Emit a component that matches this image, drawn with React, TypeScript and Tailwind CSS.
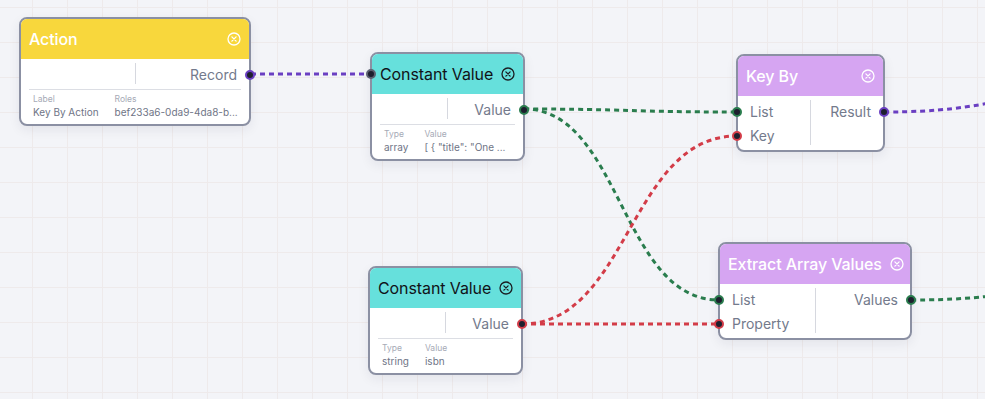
import React from "react";

type HandleProps = { side: "left" | "right"; ring: string };

function Handle({ side, ring }: HandleProps) {
  const pos = side === "left" ? "-left-[6px]" : "-right-[6px]";
  return (
    <span
      className={`absolute top-1/2 -translate-y-1/2 ${pos} w-[10px] h-[10px] rounded-full bg-[#1d1f2e] border-2 ${ring} z-10`}
    />
  );
}

function CloseIcon({ color }: { color: string }) {
  return (
    <svg className="shrink-0" width="14" height="14" viewBox="0 0 14 14" fill="none" stroke={color} strokeWidth="1.3" strokeLinecap="round">
      <circle cx="7" cy="7" r="6" />
      <path d="M4.9 4.9 9.1 9.1M9.1 4.9 4.9 9.1" />
    </svg>
  );
}

type Row = { text?: string; handle?: string };

function NodeCard({
  pos,
  headerBg,
  title,
  dark,
  inputHandle,
  left,
  right,
  details,
}: {
  pos: string;
  headerBg: string;
  title: string;
  dark?: boolean;
  inputHandle?: string;
  left: Row[];
  right: Row[];
  details?: { k1: string; v1: string; k2: string; v2: string };
}) {
  return (
    <div
      className={`absolute ${pos} rounded-lg border-2 border-[#8b90a3] bg-white shadow-[0_4px_12px_rgba(30,35,60,0.07)]`}
    >
      <div
        className={`relative h-[40px] ${headerBg} rounded-t-[6px] flex items-center justify-between pl-2 pr-2 gap-2`}
      >
        {inputHandle && <Handle side="left" ring={inputHandle} />}
        <span className={`text-[16px] whitespace-nowrap tracking-[-0.1px] ${dark ? "text-[#111318] font-normal" : "text-white font-medium"}`}>
          {title}
        </span>
        <CloseIcon color={dark ? "#1b1d22" : "#ffffff"} />
      </div>
      <div className="flex pt-1 pb-0.5">
        <div className="flex-1 flex flex-col">
          {left.map((r, i) => (
            <div key={i} className="relative h-6 flex items-center pl-3 text-sm text-[#737a8c]">
              {r.handle && <Handle side="left" ring={r.handle} />}
              {r.text}
            </div>
          ))}
        </div>
        <div className="w-px bg-[#d6d8df] mb-[3px]" />
        <div className="flex-1 flex flex-col">
          {right.map((r, i) => (
            <div key={i} className="relative h-6 flex items-center justify-end pr-3 text-sm text-[#737a8c]">
              {r.handle && <Handle side="right" ring={r.handle} />}
              {r.text}
            </div>
          ))}
        </div>
      </div>
      {details && (
        <>
          <div className="mx-2 h-px bg-[#dcdee4]" />
          <div className="mx-2 grid grid-cols-[auto_minmax(0,1fr)] gap-x-4 px-[4px] pt-[3px] pb-[5px]">
            <span className="text-[8.5px] leading-[12px] text-[#a6aab6]">{details.k1}</span>
            <span className="text-[8.5px] leading-[12px] text-[#a6aab6]">{details.k2}</span>
            <span className="text-[10px] leading-[14px] text-[#6f7586] whitespace-nowrap">{details.v1}</span>
            <span className="text-[10px] leading-[14px] text-[#6f7586] whitespace-nowrap">{details.v2}</span>
          </div>
        </>
      )}
    </div>
  );
}

const PURPLE = "#6a3fc2";
const GREEN = "#2a7d4e";
const RED = "#d33c48";

export default function App() {
  return (
    <div className="relative w-[985px] h-[399px] overflow-hidden bg-[#f3f4f8] font-['Inter',sans-serif] bg-[image:linear-gradient(to_right,#eeeaeb_1px,transparent_1px),linear-gradient(to_bottom,#eeeaeb_1px,transparent_1px)] bg-[size:35px_35px] bg-[position:32px_7px]">
      <svg className="absolute inset-0 pointer-events-none" width="985" height="399" fill="none" strokeWidth="3" strokeDasharray="5 4">
        <path d="M251 74 L370 74" stroke={PURPLE} />
        <path d="M524 109 C630 109, 630 112, 737 112" stroke={GREEN} />
        <path d="M524 109 C621 109, 621 300, 719 300" stroke={GREEN} />
        <path d="M522 324 C629 324, 629 136, 737 136" stroke={RED} />
        <path d="M522 324 L719 324" stroke={RED} />
        <path d="M884 112 C1000 112, 1000 90, 1116 90" stroke={PURPLE} />
        <path d="M911 300 C1000 300, 1000 290, 1090 290" stroke={GREEN} />
      </svg>

      <NodeCard
        pos="left-[19px] top-[17px] w-[232px]"
        headerBg="bg-[#f8d73c]"
        title="Action"
        left={[{}]}
        right={[{ text: "Record", handle: "border-[#6a3fc2]" }]}
        details={{ k1: "Label", v1: "Key By Action", k2: "Roles", v2: "bef233a6-0da9-4da8-b..." }}
      />

      <NodeCard
        pos="left-[370px] top-[52px] w-[155px]"
        headerBg="bg-[#66e0dc]"
        title="Constant Value"
        dark
        inputHandle="border-[#5d6170]"
        left={[{}]}
        right={[{ text: "Value", handle: "border-[#2a7d4e]" }]}
        details={{ k1: "Type", v1: "array", k2: "Value", v2: '[ { "title": "One ...' }}
      />

      <NodeCard
        pos="left-[368px] top-[266px] w-[155px]"
        headerBg="bg-[#66e0dc]"
        title="Constant Value"
        dark
        left={[{}]}
        right={[{ text: "Value", handle: "border-[#d33c48]" }]}
        details={{ k1: "Type", v1: "string", k2: "Value", v2: "isbn" }}
      />

      <NodeCard
        pos="left-[736px] top-[54px] w-[149px]"
        headerBg="bg-[#d6a5f2]"
        title="Key By"
        left={[
          { text: "List", handle: "border-[#2a7d4e]" },
          { text: "Key", handle: "border-[#d33c48]" },
        ]}
        right={[{ text: "Result", handle: "border-[#6a3fc2]" }]}
      />

      <NodeCard
        pos="left-[718px] top-[242px] w-[194px]"
        headerBg="bg-[#d6a5f2]"
        title="Extract Array Values"
        left={[
          { text: "List", handle: "border-[#2a7d4e]" },
          { text: "Property", handle: "border-[#d33c48]" },
        ]}
        right={[{ text: "Values", handle: "border-[#2a7d4e]" }]}
      />
    </div>
  );
}
